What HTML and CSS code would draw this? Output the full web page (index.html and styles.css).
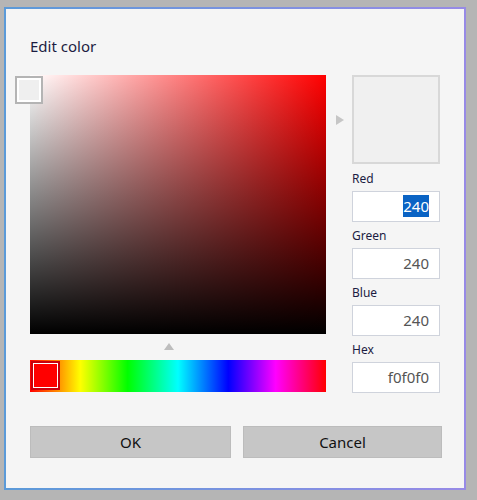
FILE: index.html
```html
<!DOCTYPE html>
<html lang="en">
<head>
    <meta charset="UTF-8">
    <meta name="viewport" content="width=device-width, initial-scale=1.0">
    <title>Edit color</title>
    <link rel="stylesheet" href="styles.css">
</head>
<body>
    <div class="dialog">
        <div class="dialog-title">Edit color</div>

        <div class="picker">
            <!-- Левая часть: поле насыщенности и полоса оттенка -->
            <div class="picker-left">
                <div class="sv-field">
                    <div class="sv-thumb"></div>
                </div>
                <div class="hue-mark"></div>
                <div class="hue-bar">
                    <div class="hue-thumb"></div>
                </div>
            </div>

            <div class="preview-arrow"></div>

            <!-- Правая часть: образец и поля ввода -->
            <div class="picker-right">
                <div class="swatch"></div>

                <div class="field">
                    <label>Red</label>
                    <div class="field-box"><span class="selected">240</span></div>
                </div>
                <div class="field">
                    <label>Green</label>
                    <div class="field-box">240</div>
                </div>
                <div class="field">
                    <label>Blue</label>
                    <div class="field-box">240</div>
                </div>
                <div class="field">
                    <label>Hex</label>
                    <div class="field-box">f0f0f0</div>
                </div>
            </div>
        </div>

        <div class="buttons">
            <button class="btn">OK</button>
            <button class="btn">Cancel</button>
        </div>
    </div>
</body>
</html>
```

FILE: styles.css
```css
body { margin: 0; padding: 0; background: #b5b5b5; font-family: "Noto Sans", "Open Sans", sans-serif; }

/* Окно */
.dialog {
    box-sizing: border-box;
    width: 462px; height: 483px;
    margin: 7px 0 0 4px;
    padding: 27px 0 0 24px;
    background: #f5f5f5;
    border: 2px solid;
    border-image: linear-gradient(to right, #5b9ad8, #978ae6) 1;
}
.dialog-title {
    height: 20px; line-height: 20px; margin-bottom: 19px;
    font-size: 15px; color: #1c1c42;
}

/* Пикер */
.picker { display: grid; grid-template-columns: 296px 26px 88px; }
.picker-left { display: flex; flex-direction: column; }
.sv-field {
    position: relative;
    height: 259px;
    background: linear-gradient(to top, #000, rgba(0,0,0,0)), linear-gradient(to right, #fff, #f00);
}
.sv-thumb {
    position: absolute; left: -15px; top: 1px;
    box-sizing: border-box; width: 28px; height: 28px;
    background: #efefef;
    border: 2px solid #b4b4b4;
    box-shadow: inset 0 0 0 2px #fff;
}
.hue-mark {
    width: 0; height: 0;
    margin: 9px 0 10px 134px;
    border-left: 5px solid transparent; border-right: 5px solid transparent;
    border-bottom: 7px solid #bdbdbd;
}
.hue-bar {
    position: relative;
    height: 32px;
    background: linear-gradient(to right, #f00 0%, #ff0 17%, #0f0 33%, #0ff 50%, #00f 67%, #f0f 83%, #f00 100%);
}
.hue-thumb {
    position: absolute; left: 1px; top: 1px;
    box-sizing: border-box; width: 29px; height: 29px;
    background: #f00;
    border: 2px solid #c8000c;
    box-shadow: inset 0 0 0 1px #fff;
}
.preview-arrow {
    width: 0; height: 0;
    margin: 40px 0 0 10px;
    border-top: 5px solid transparent; border-bottom: 5px solid transparent;
    border-left: 8px solid #c6c6c6;
}

.picker-right { display: flex; flex-direction: column; }
.swatch {
    box-sizing: border-box; height: 89px;
    background: #f0f0f0; border: 2px solid #d8d8d8;
    margin-bottom: 6px;
}
.field { display: flex; flex-direction: column; margin-bottom: 5px; }
.field:last-child { margin-bottom: 0; }
.field label {
    height: 17px; line-height: 17px; margin-bottom: 4px;
    font-size: 12px; color: #1c1c42;
}
.field-box {
    box-sizing: border-box; height: 31px;
    padding: 0 10px; line-height: 29px;
    background: #fff; border: 1px solid #cfd3dc;
    text-align: right; font-size: 15px; color: #555;
}
.selected { background: #0a63c4; color: #fff; padding: 1px 0; }

/* Кнопки */
.buttons {
    display: grid; grid-template-columns: 201px 199px; gap: 12px;
    margin-top: 33px;
}
.btn {
    height: 32px;
    background: #c6c6c6; border: 1px solid #bcbcbc;
    font-family: inherit; font-size: 15px; color: #111;
}
```
